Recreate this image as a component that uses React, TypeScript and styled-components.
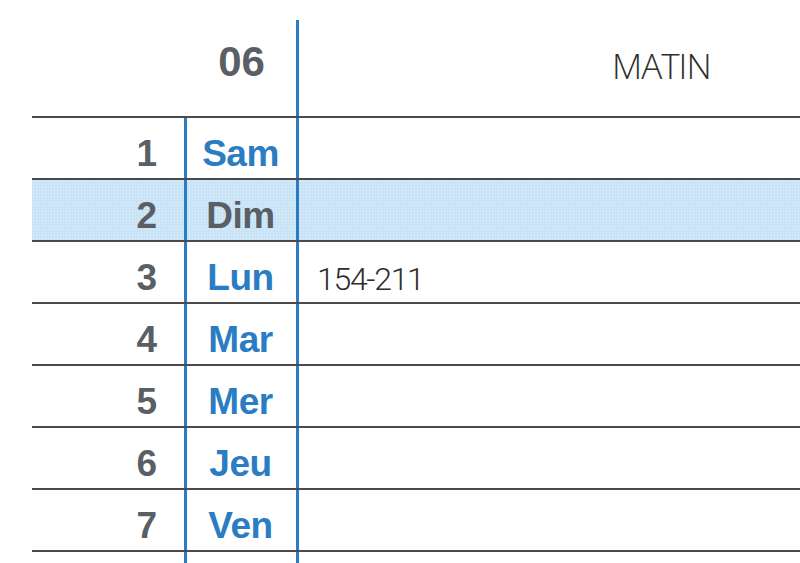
import { createGlobalStyle } from "styled-components";
import styled from "styled-components";

type Day = {
  num: number;
  name: string;
  note?: string;
  sunday?: boolean;
};

const days: Day[] = [
  { num: 1, name: "Sam" },
  { num: 2, name: "Dim", sunday: true },
  { num: 3, name: "Lun", note: "154-211" },
  { num: 4, name: "Mar" },
  { num: 5, name: "Mer" },
  { num: 6, name: "Jeu" },
  { num: 7, name: "Ven" },
];

const BLUE = "#2a7dc2";
const GREY = "#595f64";
const RULE = "#4a4a4a";

const GlobalStyle = createGlobalStyle`
  html, body {
    margin: 0;
    padding: 0;
    background: #ffffff;
  }
  body {
    font-family: "Liberation Sans", Arial, sans-serif;
    overflow: hidden;
  }
`;

const Page = styled.div`
  width: 800px;
  height: 563px;
  padding-left: 32px;
  box-sizing: border-box;
  overflow: hidden;
  background: #ffffff;
`;

const Grid = styled.div`
  display: grid;
  grid-template-columns: 152px 112px 1fr;
`;

const HeaderRow = styled.div`
  grid-column: 1 / -1;
  display: grid;
  grid-template-columns: subgrid;
  height: 116px;
  border-bottom: 2px solid ${RULE};
`;

const Month = styled.div`
  grid-column: 2;
  display: flex;
  justify-content: center;
  padding-top: 38px;
  padding-left: 3px;
  font-size: 42px;
  font-weight: 700;
  line-height: 48px;
  color: ${GREY};
`;

const MorningCell = styled.div`
  grid-column: 3;
  margin-top: 20px;
  border-left: 3px solid ${BLUE};
  padding-left: 313px;
  padding-top: 26px;
  font-family: "Open Sans", "Liberation Sans", sans-serif;
  font-weight: 300;
  font-size: 35px;
  letter-spacing: -1px;
  line-height: 40px;
  color: #2e2e2e;
`;

const Row = styled.div<{ $highlight?: boolean }>`
  grid-column: 1 / -1;
  display: grid;
  grid-template-columns: subgrid;
  height: 60px;
  border-bottom: 2px solid ${RULE};
  background-color: ${({ $highlight }) => ($highlight ? "#c9e3f7" : "transparent")};
  background-image: ${({ $highlight }) =>
    $highlight
      ? "radial-gradient(rgba(255, 255, 255, 0.45) 0.7px, transparent 1px)"
      : "none"};
  background-size: 3px 3px;
`;

const NumCell = styled.div`
  display: flex;
  align-items: center;
  justify-content: flex-end;
  padding-right: 27px;
  padding-top: 11px;
  font-size: 37px;
  font-weight: 700;
  color: ${GREY};
`;

const DayCell = styled.div<{ $sunday?: boolean }>`
  display: flex;
  align-items: center;
  justify-content: center;
  padding-top: 11px;
  padding-right: 2px;
  border-left: 3px solid ${BLUE};
  font-size: 37px;
  font-weight: 700;
  letter-spacing: -0.5px;
  color: ${({ $sunday }) => ($sunday ? GREY : BLUE)};
`;

const NoteCell = styled.div`
  display: flex;
  align-items: center;
  padding-left: 18px;
  padding-top: 13px;
  border-left: 3px solid ${BLUE};
  font-family: Roboto, "Liberation Sans", sans-serif;
  font-weight: 300;
  font-size: 32px;
  letter-spacing: -1.3px;
  color: #2e2e2e;
`;

const Tail = styled.div`
  grid-column: 1 / -1;
  display: grid;
  grid-template-columns: subgrid;
  height: 20px;
`;

const TailDay = styled.div`
  grid-column: 2;
  border-left: 3px solid ${BLUE};
  border-right: 3px solid ${BLUE};
  margin-right: -3px;
`;

export default function App() {
  return (
    <>
      <GlobalStyle />
      <Page>
        <Grid>
          <HeaderRow>
            <Month>06</Month>
            <MorningCell>MATIN</MorningCell>
          </HeaderRow>
          {days.map((d) => (
            <Row key={d.num} $highlight={d.sunday}>
              <NumCell>{d.num}</NumCell>
              <DayCell $sunday={d.sunday}>{d.name}</DayCell>
              <NoteCell>{d.note}</NoteCell>
            </Row>
          ))}
          <Tail>
            <TailDay />
          </Tail>
        </Grid>
      </Page>
    </>
  );
}
